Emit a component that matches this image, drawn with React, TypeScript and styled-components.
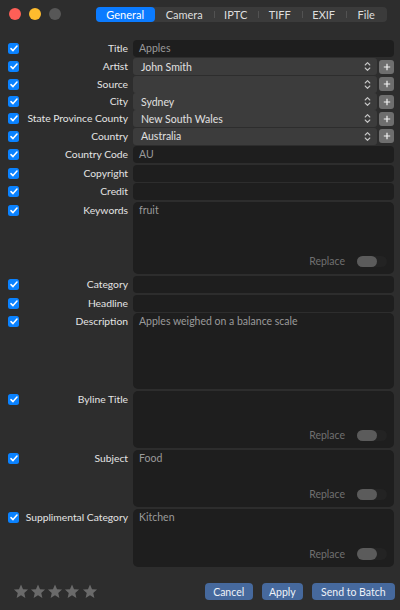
import styled, { createGlobalStyle } from "styled-components";

const GlobalStyle = createGlobalStyle`
  html, body {
    margin: 0;
    padding: 0;
    background: #2d2d2d;
  }
  body {
    font-family: Lato, "Open Sans", sans-serif;
    -webkit-font-smoothing: antialiased;
  }
`;

type Field =
  | { kind: "text"; label: string; value?: string; top: number }
  | { kind: "select"; label: string; value?: string; top: number }
  | { kind: "area"; label: string; value?: string; top: number; height: number; replace: boolean };

const fields: Field[] = [
  { kind: "text", label: "Title", value: "Apples", top: 0 },
  { kind: "select", label: "Artist", value: "John Smith", top: 1.4 },
  { kind: "select", label: "Source", top: 1.85 },
  { kind: "select", label: "City", value: "Sydney", top: 1.85 },
  { kind: "select", label: "State Province County", value: "New South Wales", top: 1.85 },
  { kind: "select", label: "Country", value: "Australia", top: 1.85 },
  { kind: "text", label: "Country Code", value: "AU", top: 2.6 },
  { kind: "text", label: "Copyright", top: 1.7 },
  { kind: "text", label: "Credit", top: 1.7 },
  { kind: "area", label: "Keywords", value: "fruit", top: 1.7, height: 72, replace: true },
  { kind: "text", label: "Category", top: 2 },
  { kind: "text", label: "Headline", top: 1.7 },
  { kind: "area", label: "Description", value: "Apples weighed on a balance scale", top: 1.6, height: 75.4, replace: false },
  { kind: "area", label: "Byline Title", top: 2, height: 57.3, replace: true },
  { kind: "area", label: "Subject", value: "Food", top: 2, height: 57, replace: true },
  { kind: "area", label: "Supplimental Category", value: "Kitchen", top: 1.7, height: 58, replace: true },
];

const tabs = [
  { name: "General", w: 59 },
  { name: "Camera", w: 59 },
  { name: "IPTC", w: 44 },
  { name: "TIFF", w: 44 },
  { name: "EXIF", w: 44 },
  { name: "File", w: 41 },
];

export default function App() {
  return (
    <Window>
      <GlobalStyle />
      <TitleBar>
        <Lights>
          <Light $color="#fe5f57" />
          <Light $color="#febc2e" />
          <Light $color="#575757" />
        </Lights>
        <Segmented>
          {tabs.map((t, i) => (
            <Tab key={t.name} $w={t.w} $active={i === 0} $divider={i > 1}>
              {t.name}
            </Tab>
          ))}
        </Segmented>
      </TitleBar>

      <Form>
        {fields.map((f) => (
          <Row
            key={f.label}
            $top={f.top}
            $height={f.kind === "area" ? f.height : f.kind === "select" ? 15.5 : 17}
            $multi={f.kind === "area"}
          >
            <Check $multi={f.kind === "area"}>
              <svg width="8" height="7" viewBox="0 0 8 7">
                <path d="M1 3.6 L3 5.6 L7 1" fill="none" stroke="#fff" strokeWidth="1.5" strokeLinecap="round" strokeLinejoin="round" />
              </svg>
            </Check>
            <Label>{f.label}</Label>
            {f.kind === "text" && <TextField>{f.value}</TextField>}
            {f.kind === "select" && (
              <SelectWrap>
                <Select>
                  <SelectValue>{f.value}</SelectValue>
                  <svg width="7" height="11" viewBox="0 0 7 11">
                    <path d="M1.2 4 L3.5 1.6 L5.8 4 M1.2 7 L3.5 9.4 L5.8 7" fill="none" stroke="#c8c8c8" strokeWidth="1.1" strokeLinecap="round" strokeLinejoin="round" />
                  </svg>
                </Select>
                <PlusButton>
                  <svg width="8" height="8" viewBox="0 0 8 8">
                    <path d="M4 0.8 V7.2 M0.8 4 H7.2" stroke="#f2f2f2" strokeWidth="1.2" />
                  </svg>
                </PlusButton>
              </SelectWrap>
            )}
            {f.kind === "area" && (
              <TextArea>
                <AreaText>{f.value}</AreaText>
                {f.replace && (
                  <ReplaceBar>
                    <ReplaceLabel>Replace</ReplaceLabel>
                    <Switch>
                      <Thumb />
                    </Switch>
                  </ReplaceBar>
                )}
              </TextArea>
            )}
          </Row>
        ))}
      </Form>

      <Footer>
        <Stars>
          {[0, 1, 2, 3, 4].map((i) => (
            <svg key={i} width="16" height="15" viewBox="0 0 24 23">
              <path d="M12 0.8 L15.1 7.9 L22.8 8.6 L17 13.7 L18.7 21.3 L12 17.3 L5.3 21.3 L7 13.7 L1.2 8.6 L8.9 7.9 Z" fill="#6a6a6a" />
            </svg>
          ))}
        </Stars>
        <Buttons>
          <Button $w={47.7}>Cancel</Button>
          <Button $w={41.6}>Apply</Button>
          <Button $w={82.4}>Send to Batch</Button>
        </Buttons>
      </Footer>
    </Window>
  );
}

const Window = styled.div`
  width: 400px;
  height: 610px;
  background: #2d2d2d;
  display: flex;
  flex-direction: column;
  overflow: hidden;
`;

const TitleBar = styled.div`
  height: 28.6px;
  display: flex;
  align-items: center;
`;

const Lights = styled.div`
  display: flex;
  gap: 8.3px;
  padding-left: 8.7px;
  width: 87px;
`;

const Light = styled.div<{ $color: string }>`
  width: 12px;
  height: 12px;
  border-radius: 50%;
  background: ${(p) => p.$color};
`;

const Segmented = styled.div`
  display: flex;
  height: 14.6px;
  background: #3b3b3b;
  border-radius: 4px;
`;

const Tab = styled.div<{ $w: number; $active: boolean; $divider: boolean }>`
  position: relative;
  width: ${(p) => p.$w}px;
  display: flex;
  align-items: center;
  justify-content: center;
  font-size: 11px;
  color: ${(p) => (p.$active ? "#ffffff" : "#dedede")};
  background: ${(p) => (p.$active ? "#0b7bff" : "transparent")};
  border-radius: 4px;

  &::before {
    content: "";
    display: ${(p) => (p.$divider ? "block" : "none")};
    position: absolute;
    left: 0;
    top: 4px;
    bottom: 4px;
    width: 1px;
    background: #525252;
  }
`;

const Form = styled.div`
  display: flex;
  flex-direction: column;
  padding: 11.4px 6px 0 8px;
`;

const Row = styled.div<{ $top: number; $height: number; $multi: boolean }>`
  display: grid;
  grid-template-columns: 11px 1fr 261px;
  align-items: ${(p) => (p.$multi ? "start" : "center")};
  height: ${(p) => p.$height}px;
  margin-top: ${(p) => p.$top}px;
`;

const Check = styled.div<{ $multi: boolean }>`
  width: 11px;
  height: 11px;
  border-radius: 2.5px;
  background: #0a82ff;
  display: flex;
  align-items: center;
  justify-content: center;
  margin-top: ${(p) => (p.$multi ? "3px" : "0")};
`;

const Label = styled.div`
  text-align: right;
  padding-right: 5px;
  font-size: 10.3px;
  line-height: 17px;
  color: #e4e4e4;
  white-space: nowrap;
`;

const TextField = styled.div`
  height: 100%;
  background: #1e1e1e;
  border-radius: 4px;
  padding: 0 6px;
  font-size: 10.5px;
  line-height: 17px;
  color: #9a9a9a;
`;

const SelectWrap = styled.div`
  display: flex;
  gap: 2.5px;
  height: 100%;
  align-items: center;
`;

const Select = styled.div`
  flex: 1;
  height: 100%;
  background: #3c3c3c;
  border-radius: 3px;
  display: flex;
  align-items: center;
  padding: 0 5.5px 0 8px;
`;

const SelectValue = styled.div`
  flex: 1;
  font-size: 10.5px;
  color: #e0e0e0;
  white-space: nowrap;
`;

const PlusButton = styled.div`
  width: 15px;
  height: 14px;
  border-radius: 3px;
  background: #6e6e6e;
  display: flex;
  align-items: center;
  justify-content: center;
`;

const TextArea = styled.div`
  height: 100%;
  box-sizing: border-box;
  background: #1e1e1e;
  border-radius: 5px;
  display: flex;
  flex-direction: column;
  padding: 0 7px 6.5px 6px;
`;

const AreaText = styled.div`
  flex: 1;
  font-size: 10.5px;
  line-height: 17px;
  color: #9a9a9a;
`;

const ReplaceBar = styled.div`
  display: flex;
  justify-content: flex-end;
  align-items: center;
  gap: 12px;
`;

const ReplaceLabel = styled.div`
  font-size: 10.5px;
  color: #707070;
`;

const Switch = styled.div`
  width: 30px;
  height: 11.5px;
  border-radius: 6px;
  background: #232323;
  display: flex;
`;

const Thumb = styled.div`
  width: 19.5px;
  height: 11.5px;
  border-radius: 6px;
  background: #5b5b5b;
`;

const Footer = styled.div`
  display: flex;
  align-items: center;
  justify-content: space-between;
  padding: 16.5px 5.5px 0 12.5px;
`;

const Stars = styled.div`
  display: flex;
  gap: 1.3px;
`;

const Buttons = styled.div`
  display: flex;
  gap: 9px;
`;

const Button = styled.div<{ $w: number }>`
  width: ${(p) => p.$w}px;
  height: 17.4px;
  border-radius: 4px;
  background: #46699d;
  color: #eef2f8;
  font-size: 10.5px;
  display: flex;
  align-items: center;
  justify-content: center;
`;
